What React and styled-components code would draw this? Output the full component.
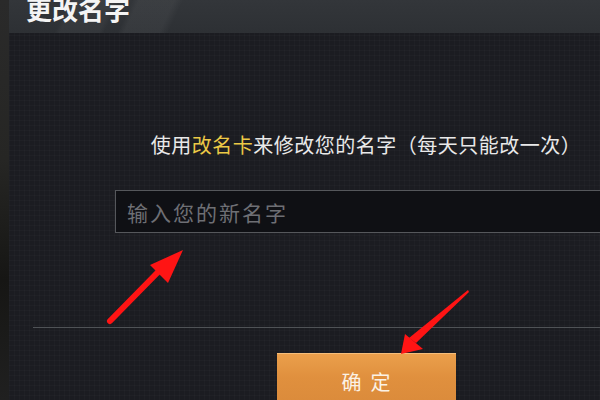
import React from "react";
import styled, { createGlobalStyle } from "styled-components";

const GlobalStyle = createGlobalStyle`
  html, body {
    margin: 0;
    padding: 0;
    width: 600px;
    height: 400px;
    overflow: hidden;
    background: #1f1f20;
  }
  body {
    font-family: "Noto Sans CJK SC", "Noto Sans", sans-serif;
  }
`;

const Screen = styled.div`
  position: relative;
  display: flex;
  width: 600px;
  height: 400px;
  overflow: hidden;
`;

const Backdrop = styled.div`
  flex: 0 0 9px;
  background: linear-gradient(180deg, #2a2a2a 0%, #262624 40%, #161614 70%, #202020 100%);
`;

const Panel = styled.div`
  flex: 0 0 714px;
  display: flex;
  flex-direction: column;
  background-color: #1b1c21;
  background-image:
    linear-gradient(rgba(255, 255, 255, 0.018) 1px, transparent 1px),
    linear-gradient(90deg, rgba(255, 255, 255, 0.018) 1px, transparent 1px);
  background-size: 5px 5px;
`;

const Header = styled.div`
  flex: 0 0 33px;
  box-sizing: border-box;
  display: flex;
  align-items: flex-end;
  padding: 0 0 11px 17px;
  overflow: hidden;
  background:
    linear-gradient(115deg, transparent 0 55px, rgba(255,255,255,0.035) 60px 95px, transparent 100px 112px, rgba(255,255,255,0.045) 118px 150px, transparent 158px),
    linear-gradient(180deg, #33363a 0%, #2d3034 100%);
`;

const Title = styled.h1`
  margin: 0;
  font-size: 26px;
  line-height: 26px;
  font-weight: 700;
  color: #f4f4f4;
  white-space: nowrap;
`;

const Body = styled.div`
  flex: 1;
  display: flex;
  flex-direction: column;
  padding: 100px 24px 0;
`;

const Notice = styled.p`
  margin: 0;
  text-align: center;
  font-size: 20px;
  line-height: 24px;
  letter-spacing: 0.5px;
  color: #e9e9e9;
`;

const Highlight = styled.span`
  color: #ecc946;
`;

const NameInput = styled.input`
  margin: 33px 82px 0;
  height: 43px;
  flex-shrink: 0;
  box-sizing: border-box;
  padding: 0 11px;
  border: 1px solid #55575b;
  background: #0f1014;
  color: #e9e9e9;
  font-family: inherit;
  font-size: 21px;
  letter-spacing: 2px;
  outline: none;

  &::placeholder {
    color: #6e6f74;
  }
`;

const Divider = styled.hr`
  margin: 94px 0 0;
  flex-shrink: 0;
  border: none;
  height: 1px;
  background: #4f5256;
`;

const ConfirmButton = styled.button`
  align-self: center;
  flex-shrink: 0;
  margin-top: 25px;
  width: 179px;
  height: 60px;
  border: none;
  padding: 0 0 4px;
  background: linear-gradient(180deg, #eba04c 0%, #e0903e 40%, #d9893a 100%);
  box-shadow: inset 0 1px 0 rgba(255, 220, 170, 0.5);
  color: #fbf2e6;
  font-family: inherit;
  font-size: 20px;
  letter-spacing: 9px;
  text-indent: 9px;
  display: flex;
  align-items: center;
  justify-content: center;
`;

const Annotations = styled.svg`
  position: absolute;
  inset: 0;
  pointer-events: none;
`;

export default function App() {
  return (
    <>
      <GlobalStyle />
      <Screen>
        <Backdrop />
        <Panel>
          <Header>
            <Title>更改名字</Title>
          </Header>
          <Body>
            <Notice>
              使用<Highlight>改名卡</Highlight>来修改您的名字（每天只能改一次）
            </Notice>
            <NameInput placeholder="输入您的新名字" />
            <Divider />
            <ConfirmButton>确定</ConfirmButton>
          </Body>
        </Panel>
        <Annotations width="600" height="400" viewBox="0 0 600 400">
          <line x1="110" y1="321" x2="162" y2="268" stroke="#ff1414" strokeWidth="6" strokeLinecap="round" />
          <polygon points="183,250 150,265 168,283" fill="#ff1414" />
          <polygon points="468,290 469,292 416,343 409,338" fill="#ff1414" />
          <polygon points="401,354 405,334 423,349" fill="#ff1414" />
        </Annotations>
      </Screen>
    </>
  );
}
